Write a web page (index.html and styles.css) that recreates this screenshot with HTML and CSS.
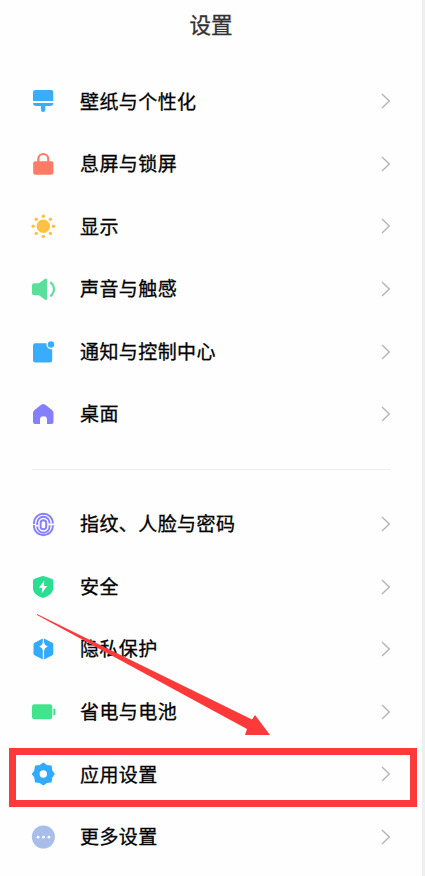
FILE: index.html
```html
<!DOCTYPE html>
<html lang="zh-CN">
<head>
<meta charset="utf-8">
<title>设置</title>
<link rel="stylesheet" href="styles.css">
</head>
<body>
<main class="screen">
  <h1 class="title">设置</h1>
  <ul class="group">
    <li class="row">
      <svg class="icon" viewBox="0 0 24 24" fill="#39adfb"><path d="M4.200 1H20Q22.300 1 22.300 3.200V12H2V3.200Q2 1 4.200 1ZM2 14H22.300Q22.300 17 19 17H14.300V21Q14.300 23 12.200 23Q10 23 10 21V17H5Q2 17 2 14Z"/></svg>
      <span class="label">壁纸与个性化</span>
      <svg class="chevron" viewBox="0 0 10 16"><path d="M1 1L8.300 8L1 15"/></svg>
    </li>
    <li class="row">
      <svg class="icon" viewBox="0 0 24 24"><rect x="2.200" y="9.300" width="20.200" height="13.400" rx="2" fill="#fe7b68"/><path d="M7.300 10V7A5 5 0 0 1 17.300 7V10" fill="none" stroke="#fe7b68" stroke-width="2.200"/></svg>
      <span class="label">息屏与锁屏</span>
      <svg class="chevron" viewBox="0 0 10 16"><path d="M1 1L8.300 8L1 15"/></svg>
    </li>
    <li class="row">
      <svg class="icon" viewBox="0 0 24 24" fill="#ffc143"><circle cx="12.300" cy="12.300" r="6.700"/><circle cx="12.300" cy="2.200" r="1.700"/><circle cx="12.300" cy="22.400" r="1.700"/><circle cx="2.200" cy="12.300" r="1.700"/><circle cx="22.400" cy="12.300" r="1.700"/><circle cx="5.200" cy="5.200" r="1.700"/><circle cx="19.400" cy="5.200" r="1.700"/><circle cx="5.200" cy="19.400" r="1.700"/><circle cx="19.400" cy="19.400" r="1.700"/></svg>
      <span class="label">显示</span>
      <svg class="chevron" viewBox="0 0 10 16"><path d="M1 1L8.300 8L1 15"/></svg>
    </li>
    <li class="row">
      <svg class="icon" viewBox="0 0 24 24"><path d="M3 6.300H8L14 1.700Q16 .7 16 3V21.500Q16 23.800 14 22.800L8 18.200H3Q1 18.200 1 16.200V8.300Q1 6.300 3 6.300Z" fill="#5ae09b"/><path d="M19.300 5Q23 8.300 23 12.200T19.300 19.400" fill="none" stroke="#5ae09b" stroke-width="2.100"/></svg>
      <span class="label">声音与触感</span>
      <svg class="chevron" viewBox="0 0 10 16"><path d="M1 1L8.300 8L1 15"/></svg>
    </li>
    <li class="row">
      <svg class="icon" viewBox="0 0 24 24" fill="#39adfb"><path d="M4.200 3.300H15.700A4.700 4.700 0 0 0 21.200 9.200V20.300Q21.200 22.500 19 22.500H4.200Q2 22.500 2 20.300V5.500Q2 3.300 4.200 3.300Z"/><circle cx="20" cy="4.500" r="3.200"/></svg>
      <span class="label">通知与控制中心</span>
      <svg class="chevron" viewBox="0 0 10 16"><path d="M1 1L8.300 8L1 15"/></svg>
    </li>
    <li class="row">
      <svg class="icon" viewBox="0 0 24 24" fill="#857ffe"><path d="M10.500 2.500Q12.300 1.300 14 2.500L21 8Q22.500 9.300 22.500 11V20Q22.500 22 20.500 22H16V17.500Q16 14.200 12.500 14.200T9 17.500V22H4Q2 22 2 20V11Q2 9.300 3.500 8Z"/></svg>
      <span class="label">桌面</span>
      <svg class="chevron" viewBox="0 0 10 16"><path d="M1 1L8.300 8L1 15"/></svg>
    </li>
  </ul>
  <hr class="divider">
  <ul class="group">
    <li class="row">
      <svg class="icon" viewBox="0 0 24 24" fill="none" stroke="#857ffe" stroke-width="1.900"><path d="M2.900 12V11A9.500 9.200 0 0 1 21.900 11V11.500M21.900 13.200V14A9.500 9.200 0 0 1 2.900 14V13"/><path d="M6.200 13V11A6.200 6.200 0 0 1 18.600 11V11.500M18.600 13.300V14.500A6.200 6.200 0 0 1 6.200 14.500"/><rect x="9.600" y="8.300" width="5.600" height="8.900" rx="2.800"/></svg>
      <span class="label">指纹、人脸与密码</span>
      <svg class="chevron" viewBox="0 0 10 16"><path d="M1 1L8.300 8L1 15"/></svg>
    </li>
    <li class="row">
      <svg class="icon" viewBox="0 0 24 24"><path d="M10.800 1.300Q12 .8 13.200 1.300L20.700 3.800Q22.200 4.400 22.200 5.800V13C22.200 18 18 20.500 13.200 22.600Q12 23.200 10.800 22.600C6 20.500 2 18 2 13V5.800Q2 4.400 3.500 3.800Z" fill="#29df91"/><path d="M13.300 5.500L7.900 12.700H11.200L10.800 18.300L16.200 11.100H12.900Z" fill="#fff"/></svg>
      <span class="label">安全</span>
      <svg class="chevron" viewBox="0 0 10 16"><path d="M1 1L8.300 8L1 15"/></svg>
    </li>
    <li class="row">
      <svg class="icon" viewBox="0 0 24 24"><path d="M10.800 2Q12.500 1.200 14 2L21 5.500Q22.300 6.300 22.300 7.500V16.500Q22.300 17.800 21 18.500L14 22Q12.500 22.800 11 22L4 18.500Q2.500 17.800 2.500 16.500V7.500Q2.500 6.300 4 5.500Z" fill="#31aaff"/><path d="M11.800 1H13V5.500L14 7.800L16.700 9.500L14 11.300L13.100 13.500V23H11.800V13.500L10.900 11.300L8.300 9.500L10.900 7.800L11.800 5.500Z" fill="#fff"/></svg>
      <span class="label">隐私保护</span>
      <svg class="chevron" viewBox="0 0 10 16"><path d="M1 1L8.300 8L1 15"/></svg>
    </li>
    <li class="row">
      <svg class="icon" viewBox="0 0 24 24" fill="#43e38e"><rect x="1" y="4.300" width="20.300" height="15" rx="2.300"/><path d="M22.300 8.500Q24.500 8.500 24.500 10.500V13.500Q24.500 15.500 22.300 15.500Z"/></svg>
      <span class="label">省电与电池</span>
      <svg class="chevron" viewBox="0 0 10 16"><path d="M1 1L8.300 8L1 15"/></svg>
    </li>
    <li class="row highlighted">
      <svg class="icon" viewBox="0 0 24 24"><path d="M12.300 1.300L15.500 3.600L20 4.300L20.700 8.800L23 12L20.700 15.200L20 19.700L15.500 20.400L12.300 22.700L9.100 20.400L4.600 19.700L3.900 15.200L1.600 12L3.900 8.800L4.600 4.300L9.100 3.600Z" fill="#31aaff" stroke="#31aaff" stroke-width="1.400" stroke-linejoin="round"/><circle cx="12.300" cy="12" r="3.700" fill="#fff"/></svg>
      <span class="label">应用设置</span>
      <svg class="chevron" viewBox="0 0 10 16"><path d="M1 1L8.300 8L1 15"/></svg>
    </li>
    <li class="row">
      <svg class="icon" viewBox="0 0 24 24"><circle cx="12.400" cy="12" r="11.500" fill="#a8bdea"/><g fill="#fff"><circle cx="7.100" cy="12.200" r="1.400"/><circle cx="12.500" cy="12.200" r="1.400"/><circle cx="17.900" cy="12.200" r="1.400"/></g></svg>
      <span class="label">更多设置</span>
      <svg class="chevron" viewBox="0 0 10 16"><path d="M1 1L8.300 8L1 15"/></svg>
    </li>
  </ul>
  <svg class="arrow" viewBox="0 0 234 122"><path d="M0 0L215 105.500L218 101L233 121H208L210 115L0 1Z"/></svg>
</main>
</body>
</html>
```
FILE: styles.css
```css
*,
*::after {
  box-sizing: border-box;
}

body {
  margin: 0;
  background: #fff;
  font-family: "Noto Sans CJK SC", sans-serif;
}

.screen {
  position: relative;
  height: 876px;
  padding: 0 31px;
  border-right: 3px solid #efefef;
  overflow: hidden;
  background: #fefefe;
}

.title {
  height: 70px;
  margin: 0;
  padding-top: 8px;
  font-size: 21.5px;
  line-height: 31px;
  font-weight: 400;
  text-align: center;
  color: #333;
  -webkit-text-stroke: 0.3px #333;
}

.group {
  margin: 0;
  padding: 0;
  list-style: none;
}

.row {
  position: relative;
  display: flex;
  align-items: center;
  height: 62.6px;
}

.icon {
  width: 24px;
  height: 24px;
  overflow: visible;
}

.label {
  flex: 1;
  margin-left: 25px;
  padding-bottom: 1.6px;
  font-size: 19px;
  line-height: 28px;
  letter-spacing: 0.42px;
  color: #000;
  -webkit-text-stroke: 0.3px #000;
}

.chevron {
  width: 10px;
  height: 16px;
  fill: none;
  stroke: #b5b5b5;
  stroke-width: 1.4;
}

.divider {
  height: 1px;
  margin: 23.4px 0 22.8px 1px;
  border: 0;
  background: #ededed;
}

.highlighted::after {
  content: "";
  position: absolute;
  top: 4.800px;
  left: -22px;
  width: 408px;
  height: 59px;
  border: 7px solid #fd3939;
}

.arrow {
  position: absolute;
  top: 614px;
  left: 37px;
  width: 234px;
  height: 122px;
  fill: #fd3939;
}
```
